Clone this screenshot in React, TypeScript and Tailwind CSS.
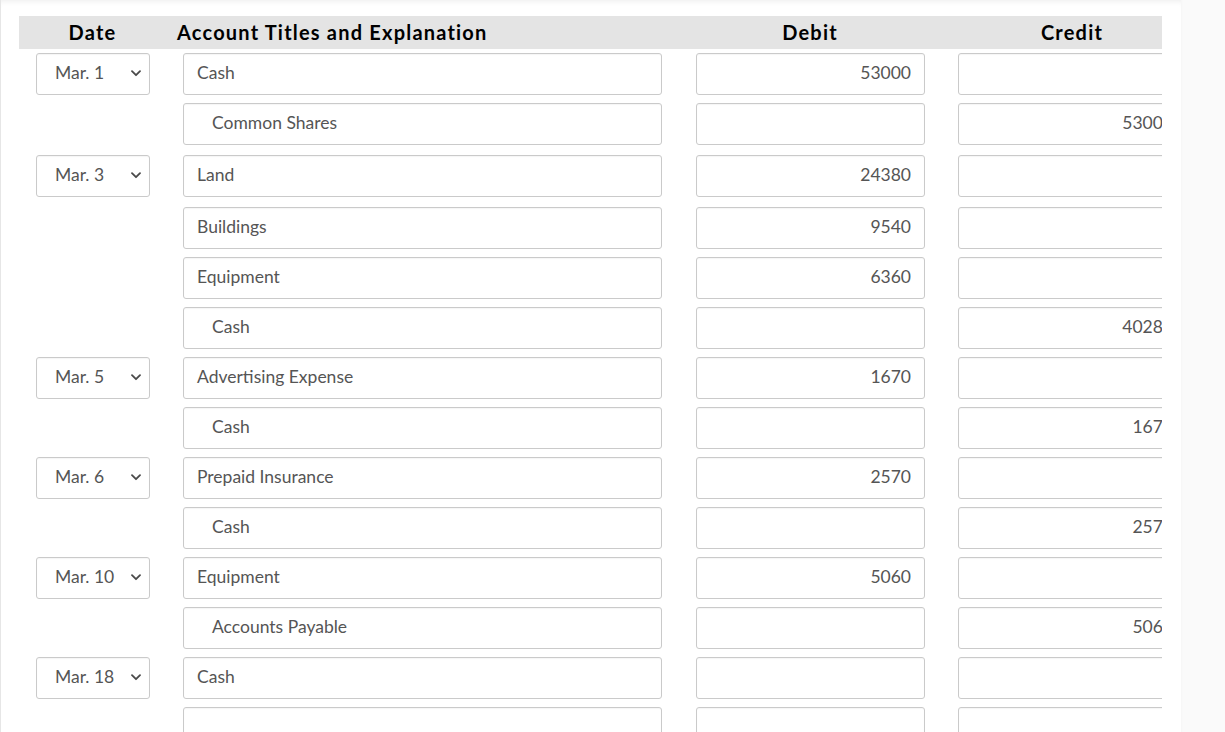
import React from 'react'

interface EntryRow {
  date?: string
  account: string
  indent?: boolean
  debit?: string
  credit?: string
}

const rows: EntryRow[] = [
  { date: 'Mar. 1', account: 'Cash', debit: '53000' },
  { account: 'Common Shares', indent: true, credit: '53000' },
  { date: 'Mar. 3', account: 'Land', debit: '24380' },
  { account: 'Buildings', debit: '9540' },
  { account: 'Equipment', debit: '6360' },
  { account: 'Cash', indent: true, credit: '40280' },
  { date: 'Mar. 5', account: 'Advertising Expense', debit: '1670' },
  { account: 'Cash', indent: true, credit: '1670' },
  { date: 'Mar. 6', account: 'Prepaid Insurance', debit: '2570' },
  { account: 'Cash', indent: true, credit: '2570' },
  { date: 'Mar. 10', account: 'Equipment', debit: '5060' },
  { account: 'Accounts Payable', indent: true, credit: '5060' },
  { date: 'Mar. 18', account: 'Cash' },
  { account: '' },
]

const Chevron = () => (
  <svg width="10" height="7" viewBox="0 0 10 7" fill="none" className="shrink-0">
    <path d="M1 1.2 L5 5.2 L9 1.2" stroke="#4a4a4a" strokeWidth="1.8" strokeLinecap="round" strokeLinejoin="round" />
  </svg>
)

const boxClass =
  'h-[42px] border border-[#cacaca] rounded-[3px] bg-white flex items-center pb-[2px] text-[17.5px] text-[#555555] shadow-[inset_0_1px_1px_rgba(0,0,0,0.04)]'

const App: React.FC = () => {
  return (
    <div
      className="w-[1225px] h-[732px] overflow-hidden flex bg-white"
      style={{ fontFamily: 'Lato, "Open Sans", sans-serif' }}
    >
      {/* Main content */}
      <div className="w-[1181px] h-full border-l border-[#e6e6e6] pl-[18px] pt-[16px] shadow-[inset_0_6px_6px_-5px_rgba(0,0,0,0.08)]">
        <div className="w-[1143px] overflow-hidden">
          {/* Header */}
          <div className="w-[1300px] h-[33px] bg-[#e4e4e4] flex items-center pb-[2px] text-[20px] font-bold tracking-[1.2px] text-black">
            <div className="w-[147px] text-center">Date</div>
            <div className="w-[513px] pl-[11px]">Account Titles and Explanation</div>
            <div className="w-[262px] text-center">Debit</div>
            <div className="w-[262px] text-center">Credit</div>
          </div>

          {/* Rows */}
          <div className="w-[1300px] flex flex-col pt-[4px]">
            {rows.map((row, i) => (
              <div
                key={i}
                className={`flex items-center ${i === 0 ? '' : i === 2 || i === 3 ? 'mt-[10px]' : 'mt-[8px]'}`}
              >
                <div className="w-[147px] pl-[17px]">
                  {row.date && (
                    <div className={`${boxClass} w-[114px] pl-[18px] pr-[8px] justify-between`}>
                      <span>{row.date}</span>
                      <Chevron />
                    </div>
                  )}
                </div>
                <div className="w-[513px] pl-[17px]">
                  <div className={`${boxClass} w-[479px] ${row.indent ? 'pl-[28px]' : 'pl-[13px]'}`}>
                    {row.account}
                  </div>
                </div>
                <div className="w-[262px] pl-[17px]">
                  <div className={`${boxClass} w-[229px] justify-end pr-[13px]`}>{row.debit}</div>
                </div>
                <div className="w-[262px] pl-[17px]">
                  <div className={`${boxClass} w-[229px] justify-end pr-[13px]`}>{row.credit}</div>
                </div>
              </div>
            ))}
          </div>
        </div>
      </div>

      {/* Right gutter */}
      <div className="flex-1 h-full bg-[#fafafa] shadow-[inset_2px_0_3px_-2px_rgba(0,0,0,0.04)]" />
    </div>
  )
}

export default App
